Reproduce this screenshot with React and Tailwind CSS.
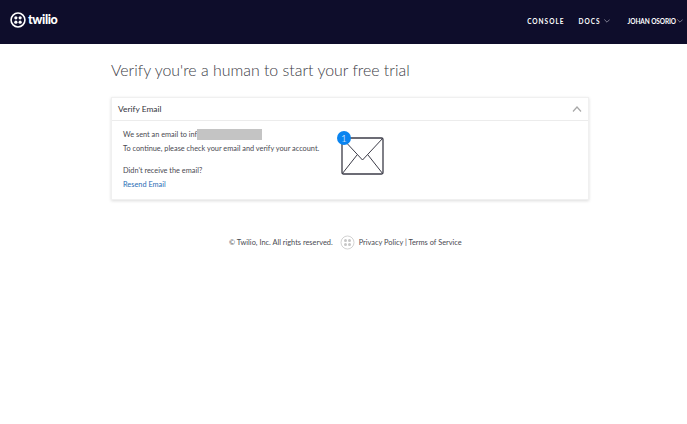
import React from "react";

function Logo({ size, color, stroke }) {
  return (
    <svg width={size} height={size} viewBox="0 0 30 30" className="shrink-0">
      <circle cx="15" cy="15" r="13" fill="none" stroke={color} strokeWidth={stroke} />
      <circle cx="11" cy="11" r="3" fill={color} />
      <circle cx="19" cy="11" r="3" fill={color} />
      <circle cx="11" cy="19" r="3" fill={color} />
      <circle cx="19" cy="19" r="3" fill={color} />
    </svg>
  );
}

function Chevron({ w, h, color, up, sw = 1 }) {
  return (
    <svg width={w} height={h} viewBox="0 0 10 6" className="shrink-0">
      <path d={up ? "M1 5.5L5 1L9 5.5" : "M0.5 0.5L5 5L9.5 0.5"} fill="none" stroke={color} strokeWidth={sw} />
    </svg>
  );
}

export default function App() {
  return (
    <div className="min-h-[424px] bg-white font-['Lato','Noto_Sans',sans-serif] text-[#3a3a44]">
      <header className="h-11 bg-[#0e0d2b] flex items-center justify-between pl-[10px] pr-[4px] text-white">
        <div className="flex items-center gap-[2px] -mt-[5px]">
          <Logo size={16} color="#ffffff" stroke={3} />
          <span className="text-[12.5px] font-black leading-none tracking-[-0.4px] mt-[1px]">twilio</span>
        </div>
        <nav className="flex items-center text-[6.5px] font-bold leading-none">
          <span className="tracking-[1px]">CONSOLE</span>
          <span className="tracking-[1px] ml-[14px]">DOCS</span>
          <span className="ml-[3px] -mt-[3px]"><Chevron w={6} h={4} color="#c8c8d4" /></span>
          <span className="ml-[18px] text-[6.5px] tracking-[-0.1px]">JOHAN OSORIO</span>
          <span className="ml-[1px] -mt-[3px]"><Chevron w={6} h={4} color="#c8c8d4" /></span>
        </nav>
      </header>

      <main className="w-[478px] ml-[111px]">
        <h1 className="mt-[15px] text-[15.9px] leading-[22px] font-light text-[#3c3c46]">
          Verify you're a human to start your free trial
        </h1>

        <section className="mt-[16px] h-[103px] border border-[#f0f0f0] bg-white shadow-[0_1px_3px_rgba(0,0,0,0.14)]">
          <div className="h-[23px] flex items-center justify-between pl-[6px] pr-[6px] border-b border-[#ececec]">
            <span className="text-[8.4px] font-normal text-[#33333c]">Verify Email</span>
            <Chevron w={10} h={6} color="#a8a8a8" up sw={1.2} />
          </div>
          <div className="flex pl-[11px] pt-[7px]">
            <div className="w-[218px] text-[7.35px] leading-[14px] text-[#4a4a52]">
              <div className="flex">
                <span>We sent an email to inf</span>
                <span className="w-[65px] h-[11px] mt-[1px] bg-[#c4c4c4]" />
              </div>
              <div className="whitespace-nowrap">To continue, please check your email and verify your account.</div>
              <div className="mt-[8px]">Didn't receive the email?</div>
              <div className="text-[#2a6db5]">Resend Email</div>
            </div>
            <div className="relative mt-[9px] w-[43px] h-[38px]">
              <svg width="43" height="38" viewBox="0 0 43 38">
                <rect x="1" y="1" width="41" height="36" rx="1.5" fill="none" stroke="#3c3c48" strokeWidth="1.3" />
                <path d="M1 1L21.5 23L42 1M1 37L16 18M42 37L27 18" fill="none" stroke="#3c3c48" strokeWidth="1" />
              </svg>
              <span className="absolute -left-[4px] -top-[6px] w-[14px] h-[14px] rounded-full bg-[#0a84f0] text-white text-[10px] font-light leading-[14px] text-center">1</span>
            </div>
          </div>
        </section>

        <footer className="mt-[35px] flex items-center text-[7.4px] text-[#4a4a52] pl-[118px] leading-none">
          <span>© Twilio, Inc. All rights reserved.</span>
          <span className="ml-[7px]"><Logo size={15} color="#c6c6c6" stroke={1.6} /></span>
          <span className="ml-[4px]">Privacy Policy | Terms of Service</span>
        </footer>
      </main>
    </div>
  );
}
